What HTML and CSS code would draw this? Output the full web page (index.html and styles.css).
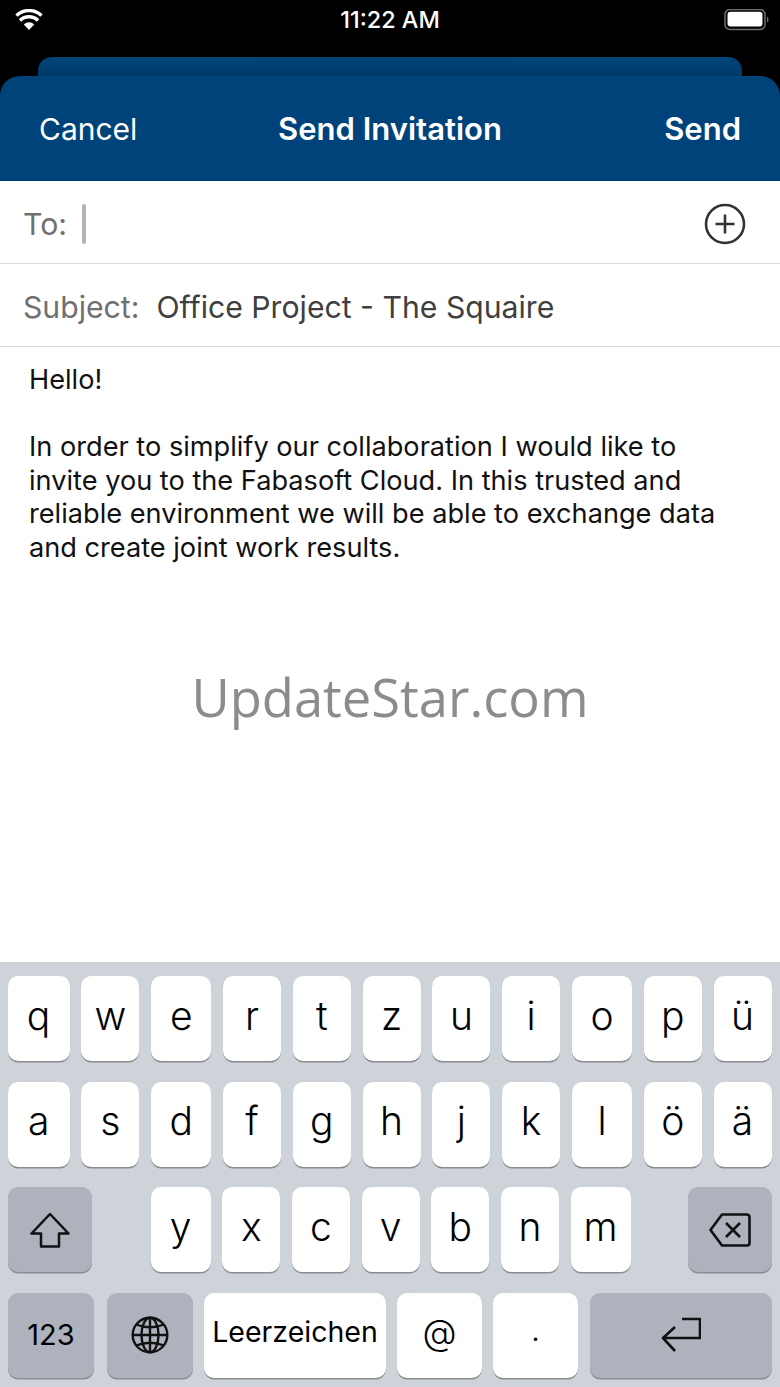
FILE: index.html
```html
<!DOCTYPE html>
<html lang="en">
<head>
    <meta charset="UTF-8">
    <meta name="viewport" content="width=device-width, initial-scale=1.0">
    <title>Send Invitation</title>
    <link rel="stylesheet" href="styles.css">
</head>
<body>
    <div class="status-bar">
        <svg class="wifi" width="28" height="21" viewBox="0 0 28 21">
            <path d="M14 21l-5.200-5.500a7.400 7.400 0 0 1 10.400 0z" fill="#fff"/>
            <path d="M5 11.400a13 13 0 0 1 18 0" fill="none" stroke="#fff" stroke-width="3.400"/>
            <path d="M1.500 6.600a18 18 0 0 1 25 0" fill="none" stroke="#fff" stroke-width="3.400"/>
        </svg>
        <span class="clock">11:22 AM</span>
        <svg class="battery" width="46" height="22" viewBox="0 0 46 22">
            <rect x="1" y="0.500" width="40" height="20" rx="5" fill="none" stroke="#6f6f6f" stroke-width="1.500"/>
            <rect x="3.500" y="2.800" width="35" height="14.600" rx="3" fill="#fff"/>
            <path d="M43 7.500v6a3 3 0 0 0 1.500-3 3 3 0 0 0-1.500-3z" fill="#6f6f6f"/>
        </svg>
    </div>

    <div class="back-card"></div>
    <header class="nav-bar">
        <span class="nav-btn">Cancel</span>
        <span class="nav-title">Send Invitation</span>
        <span class="nav-btn nav-send">Send</span>
    </header>

    <div class="field">
        <span class="field-label">To:</span>
        <span class="caret"></span>
        <svg class="add-icon" width="42" height="42" viewBox="0 0 42 42">
            <circle cx="21" cy="21" r="19" fill="none" stroke="#333" stroke-width="2.600"/>
            <path d="M21 11.500v19M11.500 21h19" fill="none" stroke="#333" stroke-width="2.600"/>
        </svg>
    </div>
    <div class="field">
        <span class="field-label">Subject:</span>
        <span class="field-value">Office Project - The Squaire</span>
    </div>

    <main class="message">
        <p>Hello!</p>
        <p>In order to simplify our collaboration I would like to<br>invite you to the Fabasoft Cloud. In this trusted and<br>reliable environment we will be able to exchange data<br>and create joint work results.</p>
        <div class="watermark">UpdateStar.com</div>
    </main>

    <div class="keyboard">
        <div class="key-row">
            <div class="key wide">q</div><div class="key">w</div><div class="key mid">e</div><div class="key">r</div><div class="key">t</div><div class="key">z</div><div class="key">u</div><div class="key">i</div><div class="key mid">o</div><div class="key">p</div><div class="key">ü</div>
        </div>
        <div class="key-row">
            <div class="key wide">a</div><div class="key">s</div><div class="key mid">d</div><div class="key">f</div><div class="key">g</div><div class="key">h</div><div class="key">j</div><div class="key">k</div><div class="key mid">l</div><div class="key">ö</div><div class="key">ä</div>
        </div>
        <div class="key-row">
            <div class="key action shift">
                <svg width="40" height="36" viewBox="0 0 40 36">
                    <path d="M20 2L1.500 21.500H11V34.500H29V21.500H38.500z" fill="none" stroke="#111" stroke-width="2.500" stroke-linejoin="round"/>
                </svg>
            </div>
            <div class="letters">
                <div class="key mid">y</div><div class="key">x</div><div class="key">c</div><div class="key">v</div><div class="key">b</div><div class="key">n</div><div class="key mid">m</div>
            </div>
            <div class="key action backspace">
                <svg width="42" height="34" viewBox="0 0 42 34">
                    <path d="M13 1.500h25a2.500 2.500 0 0 1 2.500 2.500v26a2.500 2.500 0 0 1-2.500 2.500H13L1.500 17z" fill="none" stroke="#111" stroke-width="2.600" stroke-linejoin="round"/>
                    <path d="M17 10l14 14M31 10L17 24" fill="none" stroke="#111" stroke-width="2.600"/>
                </svg>
            </div>
        </div>
        <div class="key-row bottom-row">
            <div class="key action num">123</div>
            <div class="key action globe">
                <svg width="38" height="38" viewBox="0 0 38 38" fill="none" stroke="#111" stroke-width="2.400">
                    <circle cx="19" cy="19" r="17.300"/>
                    <ellipse cx="19" cy="19" rx="8.500" ry="17.300"/>
                    <path d="M19 1.500v35M1.500 19h35M5 8.500Q19 14 33 8.500M5 29.500Q19 24 33 29.500"/>
                </svg>
            </div>
            <div class="key space">Leerzeichen</div>
            <div class="key bottom-key at">@</div>
            <div class="key bottom-key dot">.</div>
            <div class="key action enter">
                <svg width="40" height="36" viewBox="0 0 40 36">
                    <path d="M21 2H39V21H2M14 10L2 21L14 34" fill="none" stroke="#111" stroke-width="2.600" stroke-linejoin="round"/>
                </svg>
            </div>
        </div>
    </div>
</body>
</html>
```

FILE: styles.css
```css
html, body {
    margin: 0;
    height: 100%;
}

body {
    width: 780px;
    height: 1387px;
    display: flex;
    flex-direction: column;
    background-color: #000;
    font-family: Inter, "Liberation Sans", sans-serif;
    overflow: hidden;
}

.status-bar {
    height: 57px;
    flex: none;
    display: grid;
    grid-template-columns: 1fr auto 1fr;
    align-items: start;
    padding: 9px 10px 0;
    box-sizing: border-box;
    color: #fff;
}

.wifi {
    margin-left: 5px;
}

.clock {
    font-size: 23.400px;
    line-height: 22px;
    font-weight: 500;
}

.battery {
    justify-self: end;
}

.back-card {
    height: 19px;
    flex: none;
    margin: 0 38px;
    background: linear-gradient(#00457a, #003a68);
    border-radius: 14px 14px 0 0;
}

.nav-bar {
    height: 105px;
    flex: none;
    display: grid;
    grid-template-columns: 1fr auto 1fr;
    align-items: center;
    padding: 0 39px;
    background-color: #00437b;
    border-radius: 20px 20px 0 0;
    color: #fff;
    font-size: 30px;
}

.nav-title,
.nav-send {
    font-size: 31px;
    font-weight: 600;
}

.nav-send {
    text-align: right;
}

.field {
    height: 83px;
    flex: none;
    display: flex;
    align-items: center;
    padding: 3px 34px 0 23px;
    box-sizing: border-box;
    background-color: #fff;
    border-bottom: 1px solid #d9d9d9;
    font-size: 30.200px;
}

.field-label {
    color: #707070;
}

.field-value {
    margin-left: 17px;
    color: #3f3f3f;
}

.caret {
    width: 4px;
    height: 40px;
    margin-left: 15px;
    background-color: #b4b4b4;
    border-radius: 2px;
}

.add-icon {
    margin-left: auto;
}

.message {
    flex: 1;
    padding: 16px 29px 0;
    background-color: #fff;
    font-size: 27.170px;
    line-height: 33.600px;
    color: #111;
}

.message p {
    margin: 0 0 33.600px;
}

.watermark {
    margin-top: 97px;
    text-align: center;
    font-family: "Open Sans", sans-serif;
    font-size: 52.500px;
    line-height: 70px;
    color: #8c8c8c;
}

.keyboard {
    height: 425px;
    flex: none;
    padding-top: 14px;
    box-sizing: border-box;
    display: flex;
    flex-direction: column;
    gap: 20.600px;
    background-color: #ced2d9;
}

.key-row {
    height: 85px;
    display: flex;
    justify-content: space-between;
    padding: 0 8.400px 0 7.600px;
}

.bottom-row {
    justify-content: flex-start;
    gap: 11px;
    padding: 0 8px;
}

.letters {
    width: 480px;
    margin-left: 59px;
    margin-right: auto;
    display: flex;
    justify-content: space-between;
}

.key {
    width: 58px;
    height: 85px;
    display: flex;
    align-items: center;
    justify-content: center;
    box-sizing: border-box;
    padding-bottom: 7px;
    background-color: #fff;
    border-radius: 10px;
    box-shadow: 0 1.500px 0 #8a8c90;
    font-size: 39px;
    font-weight: 350;
    color: #000;
}

.key.wide {
    width: 62px;
}

.key.mid {
    width: 60px;
}

.key.action {
    background-color: #adb2bc;
    padding-bottom: 0;
}

.key.shift,
.key.backspace {
    width: 84px;
}

.key.num {
    width: 86px;
    margin-right: 2px;
    padding-bottom: 2px;
    font-size: 29px;
    font-weight: 400;
}

.key.globe {
    width: 86px;
}

.key.space {
    width: 182px;
    padding-bottom: 7px;
    font-size: 28.500px;
    font-weight: 400;
}

.key.bottom-key {
    width: 85px;
}

.key.at {
    padding-bottom: 7px;
    font-size: 35px;
    font-weight: 300;
}

.key.dot {
    padding-bottom: 8px;
    font-size: 26px;
    font-weight: 400;
}

.key.enter {
    width: 182px;
    margin-left: 1px;
}
```
